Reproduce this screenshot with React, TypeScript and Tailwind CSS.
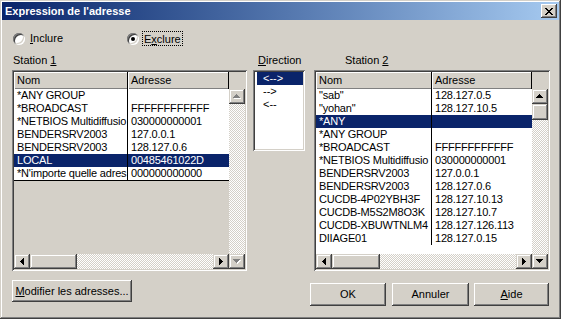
import React from "react";

const raised =
  "shadow-[inset_-1px_-1px_0_#404040,inset_1px_1px_0_#ffffff,inset_-2px_-2px_0_#808080,inset_2px_2px_0_#d4d0c8]";
const sbtn =
  "shadow-[inset_-1px_-1px_0_#404040,inset_1px_1px_0_#d4d0c8,inset_-2px_-2px_0_#808080,inset_2px_2px_0_#ffffff]";
const sunken =
  "shadow-[inset_1px_1px_0_#808080,inset_-1px_-1px_0_#ffffff,inset_2px_2px_0_#404040,inset_-2px_-2px_0_#d4d0c8]";
const checker =
  "bg-[image:repeating-conic-gradient(#d4d0c8_0%_25%,#ffffff_0%_50%)] bg-[length:2px_2px] bg-size-[2px_2px]";

type Dir = "up" | "down" | "left" | "right";

function Tri({ dir, disabled }: { dir: Dir; disabled?: boolean }) {
  const rows: [number, number][] = [
    [3, 1],
    [2, 3],
    [1, 5],
    [0, 7],
  ];
  const vertical = dir === "up" || dir === "down";
  const w = vertical ? 7 : 4;
  const h = vertical ? 4 : 7;
  const rects = (fill: string, off: number) =>
    rows.map((r, i) => {
      let x = 0,
        y = 0,
        rw = 1,
        rh = 1;
      if (dir === "up") {
        x = r[0];
        y = i;
        rw = r[1];
      } else if (dir === "down") {
        x = r[0];
        y = 3 - i;
        rw = r[1];
      } else if (dir === "left") {
        x = i;
        y = r[0];
        rh = r[1];
      } else {
        x = 3 - i;
        y = r[0];
        rh = r[1];
      }
      return <rect key={fill + i} x={x + off} y={y + off} width={rw} height={rh} fill={fill} />;
    });
  return (
    <svg width={w + 1} height={h + 1} shapeRendering="crispEdges" className="block">
      {disabled ? (
        <>
          {rects("#ffffff", 1)}
          {rects("#808080", 0)}
        </>
      ) : (
        rects("#000000", 0)
      )}
    </svg>
  );
}

function SBtn({ dir, disabled }: { dir: Dir; disabled?: boolean }) {
  return (
    <div className={`w-[16px] h-[15px] shrink-0 bg-[#d4d0c8] ${sbtn} flex items-center justify-center`}>
      <Tri dir={dir} disabled={disabled} />
    </div>
  );
}

type Row = { n: string; a: string; sel?: boolean };

function Grid({
  rows,
  nomW,
  adrW,
  hThumb,
  vThumb,
  whiteFill,
  vDisabled,
}: {
  rows: Row[];
  nomW: string;
  adrW: string;
  hThumb: string;
  vThumb: boolean;
  whiteFill: boolean;
  vDisabled: boolean;
}) {
  return (
    <div className="flex h-full">
      <div className="flex flex-col flex-1 min-w-0">
        <div className="flex h-[17px] shrink-0">
          <div
            className={`${nomW} shrink-0 pl-[3px] leading-[16px] bg-[#d4d0c8] border-r border-black shadow-[inset_1px_1px_0_#ffffff,inset_0_-1px_0_#808080]`}
          >
            Nom
          </div>
          <div
            className={`${adrW} shrink-0 pl-[3px] leading-[16px] bg-[#d4d0c8] border-r border-black shadow-[inset_1px_1px_0_#ffffff,inset_0_-1px_0_#808080]`}
          >
            Adresse
          </div>
        </div>
        <div className={`flex-1 min-h-0 overflow-hidden ${whiteFill ? "bg-white" : "bg-[#d4d0c8]"}`}>
          <div className={`bg-white ${whiteFill ? "" : "border-b border-black"}`}>
            {rows.map((r, i) => (
              <div
                key={i}
                className={`flex h-[13px] leading-[13px] whitespace-nowrap tracking-[-0.2px] ${
                  r.sel ? "bg-[#0a246a] text-white" : "text-black"
                }`}
              >
                <div className={`${nomW} shrink-0 overflow-hidden pl-[3px] border-r border-black`}>{r.n}</div>
                <div className={`${adrW} shrink-0 overflow-hidden pl-[3px]`}>{r.a}</div>
              </div>
            ))}
          </div>
        </div>
        <div className="flex h-[15px] shrink-0">
          <SBtn dir="left" />
          <div className={`flex-1 flex ${checker}`}>
            <div className={`${hThumb} h-full bg-[#d4d0c8] ${sbtn}`} />
          </div>
          <SBtn dir="right" />
        </div>
      </div>
      <div className="flex flex-col w-[16px] shrink-0">
        <div className="h-[17px] shrink-0 bg-[#d4d0c8]" />
        <SBtn dir="up" disabled={vDisabled} />
        <div className={`flex-1 flex flex-col ${checker}`}>
          {vThumb && <div className={`h-[16px] w-full bg-[#d4d0c8] ${sbtn}`} />}
        </div>
        <SBtn dir="down" disabled={vDisabled} />
      </div>
    </div>
  );
}

function Radio({ checked }: { checked?: boolean }) {
  return (
    <div
      className={`w-[12px] h-[12px] rounded-full bg-white shrink-0 flex items-center justify-center shadow-[inset_1px_1px_0_#808080,inset_-1px_-1px_0_#ffffff,inset_2px_2px_0_#404040,inset_-2px_-2px_0_#d4d0c8]`}
    >
      {checked && <div className="w-[4px] h-[4px] rounded-full bg-black" />}
    </div>
  );
}

const list1: Row[] = [
  { n: "*ANY GROUP", a: "" },
  { n: "*BROADCAST", a: "FFFFFFFFFFFF" },
  { n: "*NETBIOS Multidiffusio", a: "030000000001" },
  { n: "BENDERSRV2003", a: "127.0.0.1" },
  { n: "BENDERSRV2003", a: "128.127.0.6" },
  { n: "LOCAL", a: "00485461022D", sel: true },
  { n: "*N'importe quelle adres", a: "000000000000" },
];

const list2: Row[] = [
  { n: '"sab"', a: "128.127.0.5" },
  { n: '"yohan"', a: "128.127.10.5" },
  { n: "*ANY", a: "", sel: true },
  { n: "*ANY GROUP", a: "" },
  { n: "*BROADCAST", a: "FFFFFFFFFFFF" },
  { n: "*NETBIOS Multidiffusio", a: "030000000001" },
  { n: "BENDERSRV2003", a: "127.0.0.1" },
  { n: "BENDERSRV2003", a: "128.127.0.6" },
  { n: "CUCDB-4P02YBH3F", a: "128.127.10.13" },
  { n: "CUCDB-M5S2M8O3K", a: "128.127.10.7" },
  { n: "CUCDB-XBUWTNLM4", a: "128.127.126.113" },
  { n: "DIIAGE01", a: "128.127.0.15" },
];

export default function App() {
  return (
    <div
      className={`relative w-[561px] h-[319px] overflow-hidden bg-[#d4d0c8] text-black font-['Liberation_Sans',Arial,sans-serif] text-[11px] leading-[13px] shadow-[inset_-1px_-1px_0_#404040,inset_1px_1px_0_#d4d0c8,inset_-2px_-2px_0_#808080,inset_2px_2px_0_#ffffff]`}
    >
      <div className="flex flex-col pt-[2px] px-[2px]">
        {/* Title bar */}
        <div className="h-[18px] flex items-center bg-linear-to-r from-[#0a246a] to-[#a6caf0]">
          <div className="pl-[3px] text-white font-bold text-[11px] leading-[18px] flex-1">
            Expression de l'adresse
          </div>
          <div className={`w-[16px] h-[14px] mr-[2px] bg-[#d4d0c8] ${raised} flex items-center justify-center`}>
            <svg width="8" height="7" shapeRendering="crispEdges" className="block">
              <rect x="0" y="0" width="2" height="1" />
              <rect x="6" y="0" width="2" height="1" />
              <rect x="1" y="1" width="2" height="1" />
              <rect x="5" y="1" width="2" height="1" />
              <rect x="2" y="2" width="4" height="1" />
              <rect x="3" y="3" width="2" height="1" />
              <rect x="2" y="4" width="4" height="1" />
              <rect x="1" y="5" width="2" height="1" />
              <rect x="5" y="5" width="2" height="1" />
              <rect x="0" y="6" width="2" height="1" />
              <rect x="6" y="6" width="2" height="1" />
            </svg>
          </div>
        </div>

        {/* Body */}
        <div className="flex flex-col pl-[10px] pt-[11px]">
          {/* Radios */}
          <div className="flex h-[15px] items-center">
            <div className="w-[114px] flex items-center ml-[1px]">
              <Radio />
              <span className="ml-[5px]">
                <span className="underline">I</span>nclure
              </span>
            </div>
            <div className="flex items-center">
              <Radio checked />
              <span className="ml-[3px] px-[1px] h-[15px] leading-[14px] border border-dotted border-black">
                E<span className="underline">x</span>clure
              </span>
            </div>
          </div>

          {/* Lists */}
          <div className="flex mt-[8px]">
            <div className="flex flex-col w-[235px]">
              <div className="h-[13px] pl-[1px]">
                Station <span className="underline">1</span>
              </div>
              <div className={`mt-[3px] h-[201px] p-[2px] ${sunken}`}>
                <Grid
                  rows={list1}
                  nomW="w-[114px]"
                  adrW="w-[101px]"
                  hThumb="w-[47px]"
                  vThumb={false}
                  whiteFill={false}
                  vDisabled
                />
              </div>
            </div>

            <div className="flex flex-col w-[52px] ml-[6px]">
              <div className="h-[13px] pl-[5px]">
                <span className="underline">D</span>irection
              </div>
              <div className={`mt-[3px] h-[81px] p-[2px] bg-white ${sunken}`}>
                <div className="flex flex-col">
                  <div className="h-[13px] leading-[13px] ml-[2px] pl-[6px] bg-[#0a246a] text-white">{"<-->"}</div>
                  <div className="h-[13px] leading-[13px] ml-[2px] pl-[6px]">{"-->"}</div>
                  <div className="h-[13px] leading-[13px] ml-[2px] pl-[6px]">{"<--"}</div>
                </div>
              </div>
            </div>

            <div className="flex flex-col w-[236px] ml-[9px]">
              <div className="h-[13px] pl-[31px]">
                Station <span className="underline">2</span>
              </div>
              <div className={`mt-[3px] h-[201px] p-[2px] ${sunken}`}>
                <Grid
                  rows={list2}
                  nomW="w-[116px]"
                  adrW="w-[100px]"
                  hThumb="w-[48px]"
                  vThumb
                  whiteFill
                  vDisabled={false}
                />
              </div>
            </div>
          </div>

          {/* Buttons */}
          <div className="flex items-start">
            <div
              className={`mt-[9px] w-[120px] h-[22px] flex items-center justify-center bg-[#d4d0c8] ${raised}`}
            >
              <span>
                <span className="underline">M</span>odifier les adresses...
              </span>
            </div>
            <div className="flex mt-[12px] ml-[178px]">
              <div className={`w-[76px] h-[23px] flex items-center justify-center bg-[#d4d0c8] ${raised}`}>OK</div>
              <div
                className={`ml-[6px] w-[77px] h-[23px] flex items-center justify-center bg-[#d4d0c8] ${raised}`}
              >
                Annuler
              </div>
              <div
                className={`ml-[5px] w-[75px] h-[23px] flex items-center justify-center bg-[#d4d0c8] ${raised}`}
              >
                <span>
                  <span className="underline">A</span>ide
                </span>
              </div>
            </div>
          </div>
        </div>
      </div>
    </div>
  );
}
